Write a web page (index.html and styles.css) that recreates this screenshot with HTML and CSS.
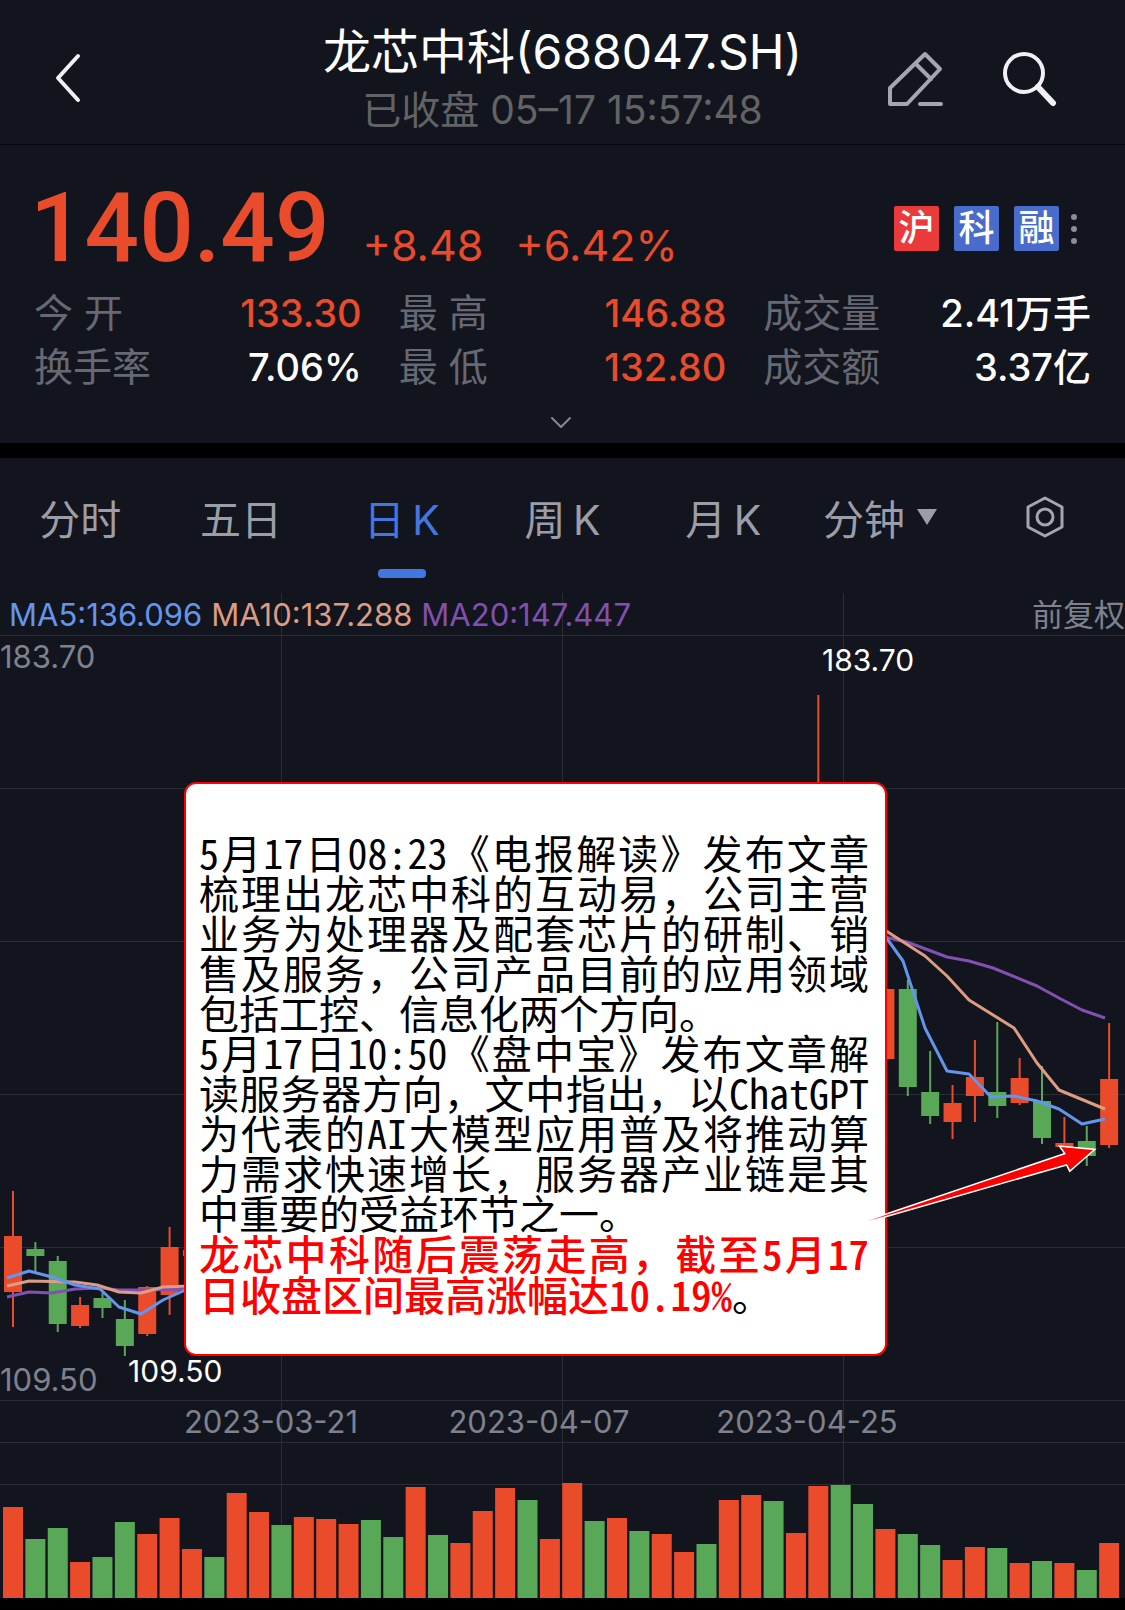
FILE: index.html
```
<!DOCTYPE html>
<html lang="zh-CN">
<head>
<meta charset="UTF-8">
<meta name="viewport" content="width=device-width, initial-scale=1.0">
<title>龙芯中科(688047.SH)</title>
<link rel="stylesheet" href="styles.css">
</head>
<body>
<header class="header">
  <button type="button" class="icon-btn back" aria-label="返回">
    <svg width="32" height="56" viewBox="0 0 32 56"><path d="M26 6 L6 28 L26 50"/></svg>
  </button>
  <div class="heading">
    <h1>龙芯中科(688047.SH)</h1>
    <p>已收盘 05–17 15:57:48</p>
  </div>
  <div class="actions">
    <button type="button" class="icon-btn edit" aria-label="编辑">
      <svg width="58" height="58" viewBox="0 0 58 58"><path d="M39 5 L54 20 L21 55 H4 V39 Z M30 15 L45 30 M34 55 H55"/></svg>
    </button>
    <button type="button" class="icon-btn search" aria-label="搜索">
      <svg width="58" height="58" viewBox="0 0 58 58"><circle cx="24" cy="24" r="19"/><path d="M38 38 L53 54" stroke-width="6"/></svg>
    </button>
  </div>
</header>

<section class="quote">
  <div class="price-row">
    <span class="price">140.49</span>
    <span class="change">+8.48</span>
    <span class="change">+6.42%</span>
    <div class="badges">
      <span class="badge red">沪</span>
      <span class="badge">科</span>
      <span class="badge">融</span>
      <button type="button" class="icon-btn dots" aria-label="更多">
        <svg width="8" height="34" viewBox="0 0 8 34"><circle cx="4" cy="5" r="3"/><circle cx="4" cy="17" r="3"/><circle cx="4" cy="29" r="3"/></svg>
      </button>
    </div>
  </div>
  <dl class="stats">
    <div><dt>今 开</dt><dd class="up">133.30</dd></div>
    <div><dt>最 高</dt><dd class="up">146.88</dd></div>
    <div><dt>成交量</dt><dd>2.41万手</dd></div>
    <div><dt>换手率</dt><dd>7.06%</dd></div>
    <div><dt>最 低</dt><dd class="up">132.80</dd></div>
    <div><dt>成交额</dt><dd>3.37亿</dd></div>
  </dl>
  <button type="button" class="icon-btn more" aria-label="展开">
    <svg width="24" height="14" viewBox="0 0 24 14"><path d="M3 2 L12 11 L21 2"/></svg>
  </button>
</section>

<nav class="tabs">
  <button type="button">分时</button>
  <button type="button">五日</button>
  <button type="button" class="active">日&thinsp;K</button>
  <button type="button">周&thinsp;K</button>
  <button type="button">月&thinsp;K</button>
  <button type="button">分钟<svg class="caret" width="20" height="16" viewBox="0 0 20 16"><path d="M0 0 H20 L10 16 Z"/></svg></button>
  <button type="button" class="setting" aria-label="设置">
    <svg width="42" height="44" viewBox="0 0 42 44"><path d="M21 3 L38 12 V32 L21 41 L4 32 V12 Z"/><circle cx="21" cy="22" r="8"/></svg>
  </button>
</nav>

<main class="chart">
  <svg id="plot" class="plot" viewBox="0 593 1125 1005"></svg>

  <div class="legend">
    <span class="ma5">MA5:136.096</span>
    <span class="ma10">MA10:137.288</span>
    <span class="ma20">MA20:147.447</span>
    <span class="adjust">前复权</span>
  </div>

  <article class="note">
    <p>5月17日08:23《电报解读》发布文章梳理出龙芯中科的互动易<span class="full">，</span>公司主营业务为处理器及配套芯片的研制、销售及服务<span class="full">，</span>公司产品目前的应用领域包括工控、信息化两个方向。</p>
    <p>5月17日10:50《盘中宝》发布文章解读服务器方向<span class="full">，</span>文中指出<span class="full">，</span>以ChatGPT为代表的AI大模型应用普及将推动算力需求快速增长<span class="full">，</span>服务器产业链是其中重要的受益环节之一。</p>
    <p><strong>龙芯中科随后震荡走高<span class="full">，</span>截至5月17日收盘区间最高涨幅达10.19%</strong>。</p>
  </article>

  <svg class="plot arrow" viewBox="0 593 1125 1005">
    <path d="M868 1221 L1066 1154 L1061 1147 L1093 1150 L1070 1170 L1067 1164 Z"/>
  </svg>
</main>
<script src="chart.js"></script>
</body>
</html>
```
FILE: styles.css
```
* {
  box-sizing: border-box;
}

body {
  margin: 0;
  background-color: #000;
  color: #fff;
  font-family: Inter, "Noto Sans CJK SC", sans-serif;
}

h1, p, dl, dd {
  margin: 0;
}

button {
  padding: 0;
  border: none;
  background: none;
  color: inherit;
  font: inherit;
  cursor: pointer;
}

svg {
  display: block;
}

.icon-btn svg,
.setting svg {
  fill: none;
  stroke: #a3a5b3;
  stroke-width: 4;
  stroke-linecap: round;
  stroke-linejoin: round;
}

/* header */
.header {
  display: grid;
  grid-template-columns: 1fr auto 1fr;
  align-items: center;
  height: 145px;
  padding: 12px 52px 0;
  background-color: #12151d;
  border-bottom: 1px solid #05060a;
}

.heading {
  padding-top: 4px;
  text-align: center;
  white-space: nowrap;
}

.heading h1 {
  font-size: 48px;
  font-weight: 400;
  line-height: 60px;
}

.heading p {
  color: #626365;
  font-size: 39px;
  line-height: 56px;
}

.back {
  justify-self: start;
}

.icon-btn.back svg,
.icon-btn.search svg {
  stroke: #f0f0f6;
}

.actions {
  display: flex;
  justify-content: flex-end;
  gap: 56px;
  margin-right: 15px;
}

/* quote */
.quote {
  padding: 24px 34px 0 30px;
  height: 298px;
  background-color: #12151d;
}

.price-row {
  display: flex;
  align-items: baseline;
  height: 117px;
  color: #ea4b2b;
}

.price {
  margin-right: 33px;
  font-family: Roboto, sans-serif;
  font-size: 96px;
  font-weight: 500;
  line-height: 118px;
}

.change {
  margin-right: 32px;
  font-size: 43px;
}

.badges {
  display: flex;
  align-self: flex-start;
  align-items: center;
  gap: 15px;
  margin: 37px 13px 0 auto;
}

.badge {
  width: 45px;
  height: 45px;
  border-radius: 2px;
  background-color: #496bcb;
  color: #fff;
  font-size: 36px;
  font-weight: 500;
  line-height: 44px;
  text-align: center;
}

.badge.red {
  background-color: #eb3a3c;
}

.icon-btn.dots svg {
  fill: #8b8e99;
  stroke: none;
}

.dots {
  margin-left: -4px;
}

.stats {
  display: grid;
  grid-template-columns: repeat(3, 1fr);
  column-gap: 37px;
  padding-left: 4px;
}

.stats div {
  display: flex;
  justify-content: space-between;
  font-size: 39px;
  line-height: 54px;
}

.stats dt {
  color: #666973;
}

.stats dd {
  font-size: 38px;
  font-weight: 500;
}

.stats .up {
  color: #ea4b2b;
}

.more {
  display: block;
  margin: 22px auto 0;
}

.icon-btn.more svg {
  stroke: #858894;
  stroke-width: 2;
}

/* period tabs */
.tabs {
  display: grid;
  grid-template-columns: repeat(7, 1fr);
  height: 135px;
  margin-top: 15px;
  background-color: #12151d;
}

.tabs button {
  display: flex;
  align-items: center;
  justify-content: center;
  position: relative;
  height: 120px;
  padding-bottom: 2px;
  color: #9b9ea9;
  font-size: 41px;
  white-space: pre;
}

.tabs .active {
  color: #4277e0;
}

.tabs .active::after {
  content: "";
  position: absolute;
  bottom: 0;
  width: 48px;
  height: 9px;
  border-radius: 4px;
  background-color: #4277e0;
}

.caret {
  margin: 0 8px 0 12px;
  fill: #9b9ea9;
}

.setting svg {
  stroke-width: 3;
}

/* chart */
.chart {
  position: relative;
  background-color: #12151d;
}

.plot {
  width: 100%;
  height: auto;
}

.plot text {
  fill: #7e828e;
  font-size: 31px;
}

.plot .mark {
  fill: #fff;
  font-size: 30px;
}

.grid {
  stroke: #2a2d35;
  stroke-width: 1;
}

.rise {
  fill: #ea4b2b;
  stroke: #ea4b2b;
}

.fall {
  fill: #58a858;
  stroke: #58a858;
}

.body {
  stroke: none;
}

.wick {
  stroke-width: 2;
}

.line {
  fill: none;
  stroke-width: 3;
  stroke-linejoin: round;
}

.line5 { stroke: #6495ed; }
.line10 { stroke: #dd9c83; }
.line20 { stroke: #8250b0; }

.legend {
  display: flex;
  gap: 9px;
  position: absolute;
  top: 0;
  left: 0;
  right: 0;
  padding-left: 9px;
  font-size: 31px;
  line-height: 44px;
}

.ma5 { color: #6495ed; }
.ma10 { color: #dd9c83; }
.ma20 { color: #8250b0; }

.adjust {
  margin-left: auto;
  color: #7e828e;
}

.note {
  position: absolute;
  top: 189px;
  left: 184px;
  right: 238px;
  padding: 48px 16px 40px 13px;
  border: 2px solid #f00;
  border-radius: 12px;
  background-color: #fff;
  color: #000;
  font-family: "Noto Sans CJK SC", sans-serif;
  font-feature-settings: "hwid"; /* half-width digits and latin */
  font-size: 40px;
  line-height: 40px;
  text-align: justify;
}

.note strong {
  color: #f00;
  font-size: 41px;
  font-weight: 500;
}

/* commas keep their full width */
.full {
  font-feature-settings: normal;
}

.arrow {
  position: absolute;
  top: 0;
  left: 0;
  pointer-events: none;
}

.arrow path {
  fill: #f00;
  stroke: #fff;
  stroke-width: 3;
  paint-order: stroke;
}
```
FILE: chart.js
```
var plot = document.getElementById('plot');

function add(name, attrs, text) {
  var el = document.createElementNS('http://www.w3.org/2000/svg', name);
  for (var key in attrs) {
    el.setAttribute(key, attrs[key]);
  }
  if (text) {
    el.textContent = text;
  }
  plot.appendChild(el);
}

// grid
[281, 562, 843].forEach(function (x) {
  add('path', { class: 'grid', d: 'M' + (x + 0.5) + ' 593 V1598' });
});
[635, 788, 941, 1094, 1247, 1400, 1442, 1484].forEach(function (y) {
  add('path', { class: 'grid', d: 'M0 ' + (y + 0.5) + ' H1125' });
});

// candles: day, colour, high, body top, body bottom, low
var step = 22.37;
var candles = [
  [0, 'rise', 1191, 1236, 1292, 1327],
  [1, 'fall', 1242, 1249, 1256, 1272],
  [2, 'fall', 1256, 1261, 1324, 1332],
  [3, 'rise', 1297, 1305, 1326, 1328],
  [4, 'fall', 1293, 1298, 1308, 1318],
  [5, 'fall', 1300, 1319, 1346, 1356],
  [6, 'rise', 1286, 1287, 1334, 1336],
  [7, 'rise', 1227, 1247, 1295, 1315],
  [8, 'rise', 1250, 1250, 1256, 1256],
  [36, 'rise', 695, 860, 960, 980],
  [39, 'rise', 989, 989, 1059, 1059],
  [40, 'fall', 980, 989, 1087, 1096],
  [41, 'fall', 1051, 1092, 1116, 1124],
  [42, 'rise', 1085, 1103, 1122, 1139],
  [43, 'rise', 1040, 1077, 1096, 1122],
  [44, 'fall', 1022, 1092, 1106, 1118],
  [45, 'rise', 1058, 1078, 1103, 1105],
  [46, 'fall', 1066, 1101, 1138, 1144],
  [47, 'rise', 1117, 1143, 1147, 1147],
  [48, 'fall', 1126, 1141, 1156, 1166],
  [49, 'rise', 1023, 1079, 1145, 1148]
];
candles.forEach(function (c) {
  var x = 13 + c[0] * step;
  add('path', { class: 'wick ' + c[1], d: 'M' + x + ' ' + c[2] + ' V' + c[5] });
  add('rect', { class: 'body ' + c[1], x: x - 9, y: c[3], width: 18, height: c[4] - c[3] });
});

// moving averages
var lines = [
  ['line20', '7,1297 29,1292 52,1293 75,1289 100,1288 119,1290 147,1290 190,1289'],
  ['line10', '7,1286 29,1281 75,1282 97,1285 119,1292 141,1293 163,1287 190,1286'],
  ['line5', '7,1278 29,1271 52,1277 75,1285 100,1289 119,1307 141,1314 163,1300 190,1288'],
  ['line20', '880,936 907,942 947,957 969,961 993,968 1037,986 1059,998 1082,1010 1105,1018'],
  ['line10', '880,927 925,956 947,976 969,1000 1014,1028 1037,1063 1059,1090 1105,1109'],
  ['line5', '880,929 903,961 925,1028 947,1071 969,1074 991,1097 1014,1096 1037,1101 1059,1109 1082,1124 1105,1119']
];
lines.forEach(function (l) {
  add('polyline', { class: 'line ' + l[0], points: l[1] });
});

// volume
var volume = [91, 59, 70, 36, 41, 76, 64, 80, 49, 41, 105, 86, 73, 81, 79, 74, 78, 61, 111, 63, 55, 87, 110, 98, 59,
  115, 77, 80, 67, 64, 46, 54, 98, 103, 97, 65, 112, 113, 94, 69, 64, 53, 38, 51, 50, 35, 37, 35, 28, 55];
var colours = 'RGGRGGRRRGRRGRRRGGRGRRRGRRGRGRRGRRGRRGGRGGRRGRGRGR';
volume.forEach(function (v, i) {
  var c = colours[i] === 'R' ? 'rise' : 'fall';
  add('rect', { class: 'body ' + c, x: 3 + i * step, y: 1598 - v, width: 20, height: v });
});

// labels
add('text', { x: 0, y: 668 }, '183.70');
add('text', { x: 0, y: 1391 }, '109.50');
add('text', { class: 'mark', x: 822, y: 671 }, '183.70');
add('text', { class: 'mark', x: 128, y: 1382 }, '109.50');
add('text', { x: 271, y: 1433, 'text-anchor': 'middle' }, '2023-03-21');
add('text', { x: 539, y: 1433, 'text-anchor': 'middle' }, '2023-04-07');
add('text', { x: 807, y: 1433, 'text-anchor': 'middle' }, '2023-04-25');
```
